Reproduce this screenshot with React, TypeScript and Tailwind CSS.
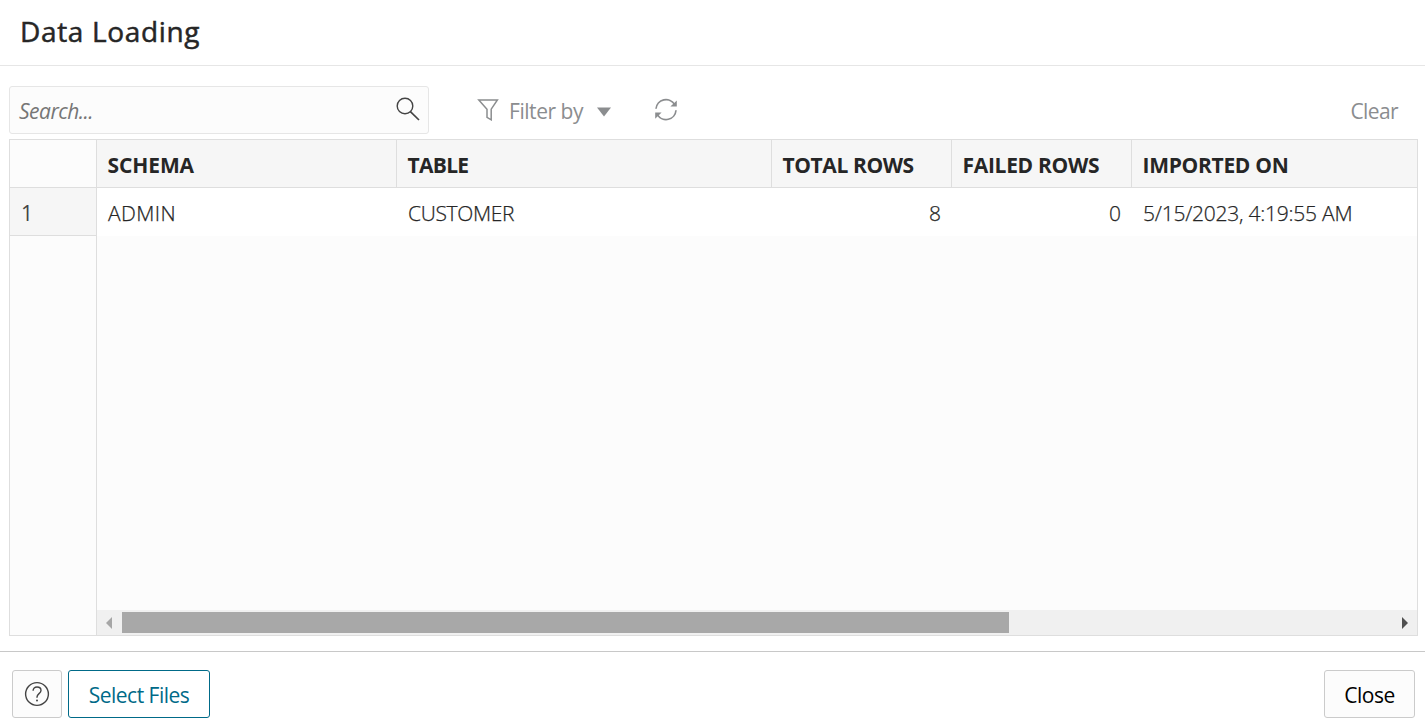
import type { ReactNode } from 'react';

type Column = { label: string; value: string; width: string; numeric?: boolean; labelTracking: string; valueTracking: string };

const columns: Column[] = [
  { label: 'SCHEMA', value: 'ADMIN', width: 'w-[300px]', labelTracking: 'tracking-[-0.1px]', valueTracking: 'tracking-[0.4px]' },
  { label: 'TABLE', value: 'CUSTOMER', width: 'w-[375px]', labelTracking: 'tracking-[-0.7px]', valueTracking: 'tracking-[-0.35px]' },
  { label: 'TOTAL ROWS', value: '8', width: 'w-[180px]', numeric: true, labelTracking: 'tracking-[-0.4px]', valueTracking: 'tracking-normal' },
  { label: 'FAILED ROWS', value: '0', width: 'w-[180px]', numeric: true, labelTracking: 'tracking-[-0.3px]', valueTracking: 'tracking-normal' },
  { label: 'IMPORTED ON', value: '5/15/2023, 4:19:55 AM', width: 'w-[285px]', labelTracking: 'tracking-[-0.3px]', valueTracking: 'tracking-[-0.24px]' },
];

function SearchIcon() {
  return (
    <svg width="24" height="24" viewBox="0 0 24 24" fill="none" stroke="#444" strokeWidth="1.4">
      <circle cx="9" cy="9" r="7.8" />
      <path d="M14.4 14.6 23 23" strokeWidth="1.7" />
    </svg>
  );
}

function FilterIcon() {
  return (
    <svg width="22" height="22" viewBox="0 0 22 22" fill="none" stroke="#8b8d8f" strokeWidth="1.5">
      <path d="M1.8 1h18.6l-6.2 9.2v10.6l-4.2-2.4v-8.2z" />
    </svg>
  );
}

function RefreshIcon() {
  return (
    <svg width="24" height="24" viewBox="0 0 24 24" fill="none" stroke="#8b8d8f" strokeWidth="1.7">
      <path d="M2 10.8A10 10 0 0 1 20.6 6.6M22 12.2A10 10 0 0 1 3.4 16.6" />
      <path d="M22.8 2.4v6.2h-6.4zM1.2 20.8v-6.2h6.4z" fill="#8b8d8f" stroke="none" />
    </svg>
  );
}

function HelpIcon() {
  return (
    <svg width="26" height="26" viewBox="0 0 26 26" fill="none" stroke="#444" strokeWidth="1.4">
      <circle cx="13" cy="13" r="11.4" />
      <path d="M9.1 9.7C9.1 7.4 10.7 6 13 6s4 1.4 4 3.5c0 3.1-4 3.2-4 6.4v.8" />
      <circle cx="13" cy="19.4" r="1" fill="#444" stroke="none" />
    </svg>
  );
}

function Button({ children, className }: { children: ReactNode; className: string }) {
  return (
    <button className={`flex h-12 items-center justify-center rounded-[3px] border ${className}`}>{children}</button>
  );
}

export default function App() {
  return (
    <div className="flex h-[725px] w-[1425px] flex-col overflow-hidden bg-white font-['Open_Sans','Noto_Sans',sans-serif] text-[21px] leading-[28px] text-[#262626]">
      <header className="h-[66px] shrink-0 border-b border-[#e6e6e6] pt-[12px] pl-[20px]">
        <h1 className="text-[28px] leading-[38px] font-normal tracking-[0.65px] [-webkit-text-stroke:0.5px_#262626]">Data Loading</h1>
      </header>

      <main className="flex h-[585px] shrink-0 flex-col px-[9px] pt-5">
        <div className="flex h-12 w-[1408px] shrink-0 items-center">
          <label className="flex h-12 w-[420px] items-center rounded-[3px] border border-[#e6e6e6] bg-[#fcfcfc] px-[8px]">
            <span className="min-w-0 flex-1 pt-[2px] pl-px tracking-[-0.5px] text-[#767676] italic">Search...</span>
            <span className="mb-[2px]"><SearchIcon /></span>
          </label>
          <div className="ml-[48px] flex w-[134px] items-center text-[#8b8d8f]">
            <span className="-mt-[1px]"><FilterIcon /></span>
            <span className="ml-[10px] w-[88px] pt-[2px] tracking-[-0.45px]">Filter by</span>
            <svg className="mt-[3px]" width="14" height="10" viewBox="0 0 14 10"><path d="M0 .5h14L7 9.5z" fill="#8b8d8f" /></svg>
          </div>
          <span className="ml-[43px]"><RefreshIcon /></span>
          <span className="mr-[19px] ml-auto pt-[2px] tracking-[-0.6px] text-[#8b8d8f]">Clear</span>
        </div>

        <section className="mt-[5px] flex h-[497px] w-[1409px] shrink-0 border border-[#dedede] bg-[#fcfcfc]">
          <div className="w-[87px] shrink-0 border-r border-[#dedede]">
            <div className="h-12 border-b border-[#dedede]" />
            <div className="h-12 border-b border-[#dedede] bg-[#f6f6f6] pt-[11px] pl-[11px] text-[#444]">1</div>
          </div>
          <div className="flex min-w-0 flex-1 flex-col overflow-hidden">
            <div className="flex h-12 shrink-0 border-b border-[#dedede] bg-[#f6f6f6]">
              {columns.map((column, index) => (
                <div key={column.label} className={`${column.width} ${column.labelTracking} shrink-0 pt-[11px] pl-[10.5px] font-bold whitespace-nowrap ${index < 4 ? 'border-r border-[#dedede]' : ''}`}>
                  {column.label}
                </div>
              ))}
            </div>
            <div className="flex h-12 shrink-0 bg-white">
              {columns.map((column) => (
                <div key={column.label} className={`${column.width} ${column.valueTracking} shrink-0 px-[11px] pt-[11px] font-light whitespace-nowrap [-webkit-text-stroke:0.25px_#262626] ${column.numeric ? 'text-right' : ''}`}>
                  {column.value}
                </div>
              ))}
            </div>
            <div className="flex-1" />
            <div className="flex h-[25px] shrink-0 items-center bg-[#f0f0f0]">
              <svg className="mr-[9px] ml-[9px]" width="7" height="12" viewBox="0 0 7 12"><path d="M6 0v12L0 6z" fill="#a6a6a6" /></svg>
              <div className="h-[21px] w-[887px] bg-[#a8a8a8]" />
              <svg className="mr-[9px] ml-auto" width="7" height="12" viewBox="0 0 7 12"><path d="M1 0v12l6-6z" fill="#505050" /></svg>
            </div>
          </div>
        </section>
      </main>

      <footer className="flex h-[74px] shrink-0 items-start border-t border-[#c8c8c8] pt-[18px] pr-[10px] pl-3">
        <Button className="w-[50px] border-[#cbcbcb] bg-[#fcfcfc] pb-px"><HelpIcon /></Button>
        <Button className="ml-[6px] w-[142px] border-[#006a88] bg-white pt-[2px] tracking-[-0.5px] text-[#006a88]">Select Files</Button>
        <Button className="ml-auto w-[91px] border-[#cbcbcb] bg-[#fcfcfc] pt-[2px] tracking-[-0.5px] text-black">Close</Button>
      </footer>
    </div>
  );
}
